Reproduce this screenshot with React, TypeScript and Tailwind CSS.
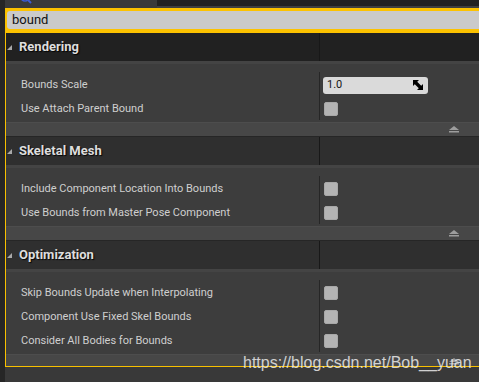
type Row = { label: string; kind: "check" | "number" };

type SectionProps = {
  title: string;
  first?: boolean;
  dark?: boolean;
  rows: Row[];
};

const sections: SectionProps[] = [
  {
    title: "Rendering",
    first: true,
    dark: true,
    rows: [
      { label: "Bounds Scale", kind: "number" },
      { label: "Use Attach Parent Bound", kind: "check" },
    ],
  },
  {
    title: "Skeletal Mesh",
    rows: [
      { label: "Include Component Location Into Bounds", kind: "check" },
      { label: "Use Bounds from Master Pose Component", kind: "check" },
    ],
  },
  {
    title: "Optimization",
    rows: [
      { label: "Skip Bounds Update when Interpolating", kind: "check" },
      { label: "Component Use Fixed Skel Bounds", kind: "check" },
      { label: "Consider All Bodies for Bounds", kind: "check" },
    ],
  },
];

function DragIcon() {
  return (
    <svg width="10" height="10" viewBox="0 0 10 10">
      <path d="M0 0 H6 L0 6 Z" fill="#000" />
      <path d="M10 10 H4 L10 4 Z" fill="#000" />
      <path d="M1.5 1.5 L8.5 8.5" stroke="#000" strokeWidth="3.4" />
    </svg>
  );
}

function Section({ title, first, dark, rows }: SectionProps) {
  return (
    <div className="flex flex-col shrink-0">
      <div
        className={
          first
            ? "flex h-[28px] bg-[#212121]"
            : dark
              ? "flex h-[29px] border-t border-[#1e1e1e] bg-[#212121]"
              : "flex h-[29px] border-t border-[#262626] bg-[#2f2f2f]"
        }
      >
        <div className="w-[313px] flex items-center pl-[1px]">
          <svg width="5" height="5" viewBox="0 0 5 5">
            <path d="M5 0 V5 H0 Z" fill="#a9a9a9" />
          </svg>
          <span className="ml-[7px] text-[13px] font-bold text-[#dedede] [text-shadow:1px_1px_1px_rgba(0,0,0,0.9)]">
            {title}
          </span>
        </div>
        <div className="flex-1 border-l border-[#181818]" />
      </div>
      <div className="h-[3px] bg-[#444444]" />
      <div className="bg-[#3d3d3d] pt-2 pb-[2px]">
        {rows.map((row) => (
          <div key={row.label} className="flex h-[24px]">
            <div className="w-[313px] pl-[15px] pt-[2px] flex items-center text-[11px] text-[#cfcfcf] whitespace-nowrap">
              {row.label}
            </div>
            <div className="flex-1 border-l border-[#262626] pt-[2px] flex items-center">
              {row.kind === "number" ? (
                <div className="ml-[3px] w-[105px] h-[17px] rounded-[3px] bg-[#dadada] flex items-center justify-between pl-[4px] pr-[5px] text-[11px] text-[#151515]">
                  <span>1.0</span>
                  <DragIcon />
                </div>
              ) : (
                <div className="ml-[4px] w-[14px] h-[14px] rounded-[2px] bg-[#b4b4b4] border border-[#a8a8a8]" />
              )}
            </div>
          </div>
        ))}
      </div>
      <div className="h-[14px] border-t border-[#4d4d4d] bg-[#474747] flex items-center pl-[443px]">
        <svg width="10" height="7" viewBox="0 0 10 7">
          <path d="M5 0 L10 4 H0 Z" fill="#9d9d9d" />
          <rect x="0" y="5" width="10" height="1.5" fill="#9d9d9d" />
        </svg>
      </div>
    </div>
  );
}

export default function App() {
  return (
    <div className="relative w-[479px] h-[382px] overflow-hidden bg-[#393939] font-[Roboto,'Liberation_Sans',sans-serif] flex flex-col">
      <div className="flex h-[8px] shrink-0">
        <div className="w-[5px] bg-[#262626]" />
        <div className="w-[152px] bg-[#3a3a3a] flex overflow-hidden">
          <svg width="12" height="12" viewBox="0 0 12 12" className="ml-[15px] -mt-[8px]">
            <circle cx="5" cy="5" r="4" fill="none" stroke="#3b5bd6" strokeWidth="1.6" />
            <path d="M8 8 L11 11" stroke="#3b5bd6" strokeWidth="2" />
          </svg>
        </div>
        <div className="flex-1 bg-[#222222] border-b-2 border-[#404040]" />
      </div>
      <div className="flex flex-1">
        <div className="w-[5px] bg-[#262626]" />
        <div className="flex-1 min-w-0 self-start h-[359px] overflow-hidden border-l border-b border-[#f8c000] flex flex-col">
          <div className="h-[25px] shrink-0 bg-[#fcc200] pt-[3px] pb-[4px] pl-[1px]">
            <div className="h-[18px] rounded-l-[3px] bg-[#cacaca] flex items-center pl-[5px] text-[13px] text-[#111111]">
              bound
            </div>
          </div>
          {sections.map((s) => (
            <Section key={s.title} {...s} />
          ))}
        </div>
      </div>
      <div className="absolute left-[243px] top-[353px] text-[16px] leading-[20px] font-['Liberation_Sans',Arial,sans-serif] text-[rgba(236,236,236,0.85)] whitespace-nowrap">
        https://blog.csdn.net/Bob__yuan
      </div>
    </div>
  );
}
